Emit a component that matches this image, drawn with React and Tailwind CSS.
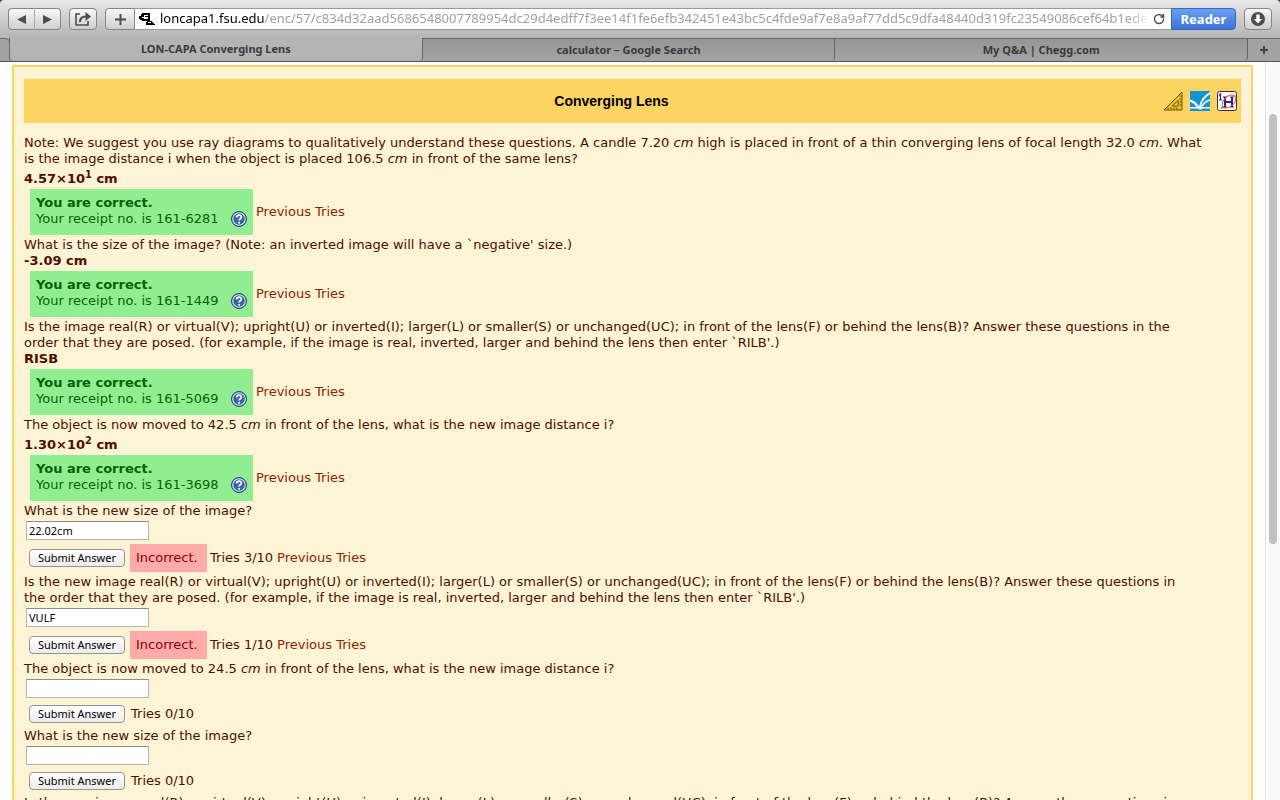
import { RotateCw } from "lucide-react";

const LINK = "text-[#8b2500] hover:underline";

const TABS = ["LON-CAPA Converging Lens", "calculator – Google Search", "My Q&A | Chegg.com"];

function HelpIcon() {
  return (
    <svg viewBox="0 0 16 16" className="h-4 w-4 shrink-0" aria-label="Help">
      <circle cx="8" cy="8" r="7.5" fill="#2f5793" stroke="#24457c" strokeWidth="1" />
      <circle cx="8" cy="8" r="6.3" fill="#3a64a4" stroke="#dfe9f7" strokeWidth="1.1" />
      <path d="M5.7 6.4c0-3 4.7-3 4.7-.3 0 1.700-2.300 1.700-2.300 3.500" fill="none" stroke="#fff" strokeWidth="1.7" />
      <circle cx="8.1" cy="11.700" r="1" fill="#fff" />
    </svg>
  );
}

function Toolbar() {
  const btn = "flex h-[22px] items-center justify-center rounded border border-[#858585] bg-linear-to-b from-[#f8f8f8] to-[#cfcfcf] text-[#4d4d4d]";
  return (
    <div className="flex h-[38px] shrink-0 items-center rounded-t bg-linear-to-b from-[#e8e8e8] to-[#b4b4b4] px-2">
      <div className="flex">
        <button className={`${btn} w-[27px] rounded-r-none border-r-[#aaa]`} aria-label="Back">
          <svg viewBox="0 0 9 9" className="h-[9px] w-[9px]"><path d="M9 0v9L0 4.500z" fill="currentColor" /></svg>
        </button>
        <button className={`${btn} w-[26px] rounded-l-none border-l-0`} aria-label="Forward">
          <svg viewBox="0 0 9 9" className="h-[9px] w-[9px]"><path d="M0 0v9L9 4.500z" fill="currentColor" /></svg>
        </button>
      </div>
      <button className={`${btn} ml-2 w-7`} aria-label="Share">
        <svg viewBox="0 0 16 14" className="h-[14px] w-4" fill="none" stroke="currentColor" strokeWidth="1.6">
          <path d="M5 2H1v11h12V9" />
          <path d="M5 10C5 6 7 4.500 11 4.500" strokeWidth="2.2" />
          <path d="M10.500 0 16 4.500l-5.500 4.500z" fill="currentColor" stroke="none" />
        </svg>
      </button>
      <button className={`${btn} ml-2 w-[30px] rounded-r-none`} aria-label="Add bookmark">
        <svg viewBox="0 0 11 11" className="h-[11px] w-[11px]"><path d="M5.500 0v11M0 5.500h11" stroke="currentColor" strokeWidth="2" /></svg>
      </button>
      <div className="flex h-[22px] min-w-0 flex-1 items-center border-y border-[#999] bg-white pl-1">
        <svg viewBox="0 0 16 12" className="h-3 w-4 shrink-0" shapeRendering="crispEdges">
          <path d="M3 0h8v8h2v1h1v1h1v1h1v1H7V9h1V8H3V7H1V6H0V3h2V1h1z" fill="#000" />
          <path d="M5 2h4v4H5z" fill="#fff" />
          <path d="M6 3h3v1H6zM2 4h3v2H2z" fill="#000" />
          <path d="M3 4h2v1H3zM9 9h3v1H9z" fill="#fff" />
        </svg>
        <div className="ml-[5px] min-w-0 flex-1 overflow-hidden font-['Noto_Sans','Open_Sans',sans-serif] text-[13px] whitespace-nowrap text-[#a0a0a0] mask-r-from-98%">
          <span className="text-black">loncapa1.fsu.edu</span>
          /enc/57/c834d32aad5686548007789954dc29d4edff7f3ee14f1fe6efb342451e43bc5c4fde9af7e8a9af77dd5c9dfa48440d319fc23549086cef64b1ede6
        </div>
        <button className="mr-[6px] ml-1 shrink-0 text-[#4d4d4d]" aria-label="Reload"><RotateCw size={12} strokeWidth={3} /></button>
      </div>
      <button className="h-[22px] w-[65px] rounded-r border border-[#3a66bd] bg-linear-to-b from-[#6a9ff0] to-[#3b74d8] font-['Noto_Sans',sans-serif] text-[13px] leading-5 font-bold text-white">Reader</button>
      <button className={`${btn} ml-2 w-7`} aria-label="Downloads">
        <svg viewBox="0 0 14 14" className="h-[14px] w-[14px]">
          <circle cx="7" cy="7" r="7" fill="currentColor" />
          <path d="M5.300 2.500h3.400V7H11.200L7 11.500 2.800 7h2.500z" fill="#fff" />
        </svg>
      </button>
    </div>
  );
}

function TabBar() {
  return (
    <div className="flex h-6 shrink-0 border-b border-[#555] bg-[#a2a2a2] font-['Noto_Sans',sans-serif] text-[11px] font-bold text-[#3a3a3a]">
      <div className="w-[9px] rounded-tr border-t border-[#666]" />
      {TABS.map((tab, i) => (
        <button
          key={tab}
          className={i === 0
            ? "flex-1 rounded-b border-x border-[#666] bg-[#b4b4b4]"
            : "flex-1 rounded-br border-t border-r border-[#666] bg-linear-to-b from-[#969696] to-[#a4a4a4]"}
        >
          {tab}
        </button>
      ))}
      <button className="flex w-8 items-center justify-center border-t border-[#666]" aria-label="New tab">
        <svg viewBox="0 0 8 8" className="h-2 w-2"><path d="M4 0v8M0 4h8" stroke="#444" strokeWidth="2" /></svg>
      </button>
    </div>
  );
}

function Correct({ answer, receipt, tall }) {
  return (
    <>
      <p className={`leading-4 font-bold ${tall ? "pt-1" : ""}`}>{answer}</p>
      <div className="my-[2px] ml-[6px] flex items-center gap-[3px]">
        <div className="h-[46px] w-[223px] bg-[#90ee90] p-[6px] text-[#006400]">
          <p className="font-bold">You are correct.</p>
          <p className="flex items-center justify-between whitespace-nowrap">Your receipt no. is {receipt} <HelpIcon /></p>
        </div>
        <a href="#tries" className={LINK}>Previous Tries</a>
      </div>
    </>
  );
}

function Answer({ label, value = "", tries, incorrect }) {
  return (
    <form onSubmit={(e) => e.preventDefault()}>
      <input
        aria-label={label}
        defaultValue={value}
        className="mt-[2px] ml-[2px] block h-[19px] w-[123px] border border-[#b5b5b5] border-t-[#8e8e8e] bg-white px-[2px] font-['Noto_Sans',sans-serif] text-[11px] text-black outline-none"
      />
      <div className={`mt-[2px] ml-[5px] flex items-center ${incorrect ? "h-8" : "h-7"}`}>
        <button className="h-[18px] w-24 rounded border border-[#949494] bg-linear-to-b from-white to-[#ececec] font-['Noto_Sans',sans-serif] text-[11px] leading-4 text-black">Submit Answer</button>
        {incorrect && <span className="ml-[5px] w-[77px] bg-[#ffaaaa] p-[6px] text-[#8b0000]">Incorrect.</span>}
        <span className={incorrect ? "ml-[3px]" : "ml-[6px]"}>Tries {tries}/10</span>
        {incorrect && <a href="#tries" className={`ml-1 ${LINK}`}>Previous Tries</a>}
      </div>
    </form>
  );
}

export default function App() {
  return (
    <div className="flex h-screen flex-col overflow-hidden bg-[#3c3f52]">
      <Toolbar />
      <TabBar />
      <div className="flex min-h-0 flex-1 bg-white">
        <main className="mt-[3px] mr-3 ml-3 min-w-0 flex-1 overflow-hidden border-2 border-b-0 border-[#fcd462] bg-[#fdf3d5] px-[10px] pt-3 font-['DejaVu_Sans',Verdana,sans-serif] text-[13px] leading-4 text-[#4d0f00]">
          <header className="mb-3 flex h-11 items-center bg-[#fcd462] px-1">
            <div className="w-8" />
            <h1 className="flex-1 text-center font-['Liberation_Sans',Arial,sans-serif] text-[14px] font-bold text-black">Converging Lens</h1>
            <div className="flex gap-[7px]">
              <svg viewBox="0 0 20 20" className="h-5 w-5">
                <path d="M19 1v18H1z" fill="#e8b920" stroke="#6b5310" />
                <path d="M15 9.500V15H9.500z" fill="#fcd462" stroke="#6b5310" />
                <path d="M5 18.500v-2M8 18.500v-2M11 18.500v-2M14 18.500v-2M18.500 5h-2M18.500 8h-2M18.500 11h-2M18.500 14h-2" stroke="#7a5f10" />
              </svg>
              <svg viewBox="0 0 20 20" className="h-5 w-5">
                <path d="M0 0h20v20H0z" fill="#1293d8" />
                <path d="M0 8.500q6 1.500 9 7Q11 6 20 1v2q-7 5-9.500 12Q14 10 20 8v1.500q-5 2-8 6.500h8v1.500h-7q-1.500 0-3 1.500-1.500-1.500-3-1.500H0V16h6.500Q4 12 0 10.500z" fill="#fff" />
              </svg>
              <svg viewBox="0 0 20 20" className="h-5 w-5">
                <rect x=".5" y=".5" width="19" height="19" rx="2" fill="#fff" stroke="#333" />
                <path d="M8 6v10M15 6v10M8 11h7" stroke="#35207a" strokeWidth="2" />
                <path d="M6 6h4M13 6h4M6 16h4M13 16h4" stroke="#35207a" />
                <path d="M2 4.500 3.500 3v6M2 9h3" fill="none" stroke="#35207a" strokeWidth="1.200" />
                <ellipse cx="12" cy="10.500" rx="8" ry="5" transform="rotate(-42 12 10.500)" fill="none" stroke="#e24a5a" />
                <circle cx="5" cy="17" r="1" fill="#2a9a50" />
              </svg>
            </div>
          </header>

          <p>Note: We suggest you use ray diagrams to qualitatively understand these questions. A candle 7.20 <i>cm</i> high is placed in front of a thin converging lens of focal length 32.0 <i>cm</i>. What<br /> is the image distance i when the object is placed 106.5 <i>cm</i> in front of the same lens?</p>
          <Correct tall answer={<>4.57×10<sup>1</sup> cm</>} receipt="161-6281" />
          <p>What is the size of the image? (Note: an inverted image will have a `negative' size.)</p>
          <Correct answer="-3.09 cm" receipt="161-1449" />
          <p>Is the image real(R) or virtual(V); upright(U) or inverted(I); larger(L) or smaller(S) or unchanged(UC); in front of the lens(F) or behind the lens(B)? Answer these questions in the<br /> order that they are posed. (for example, if the image is real, inverted, larger and behind the lens then enter `RILB'.)</p>
          <Correct answer="RISB" receipt="161-5069" />
          <p>The object is now moved to 42.5 <i>cm</i> in front of the lens, what is the new image distance i?</p>
          <Correct tall answer={<>1.30×10<sup>2</sup> cm</>} receipt="161-3698" />
          <p>What is the new size of the image?</p>
          <Answer label="New image size" value="22.02cm" tries={3} incorrect />
          <p>Is the new image real(R) or virtual(V); upright(U) or inverted(I); larger(L) or smaller(S) or unchanged(UC); in front of the lens(F) or behind the lens(B)? Answer these questions in<br /> the order that they are posed. (for example, if the image is real, inverted, larger and behind the lens then enter `RILB'.)</p>
          <Answer label="New image type" value="VULF" tries={1} incorrect />
          <p>The object is now moved to 24.5 <i>cm</i> in front of the lens, what is the new image distance i?</p>
          <Answer label="Image distance" tries={0} />
          <p>What is the new size of the image?</p>
          <Answer label="Image size" tries={0} />
          <p>Is the new image real(R) or virtual(V); upright(U) or inverted(I); larger(L) or smaller(S) or unchanged(UC); in front of the lens(F) or behind the lens(B)? Answer these questions in<br /> the order that they are posed.</p>
        </main>
        <div className="w-[15px] shrink-0 border-l border-[#e4e4e4] bg-[#fafafa] px-[3px] pt-[52px]">
          <div className="h-[430px] w-2 rounded-full bg-[#c1c1c1]" />
        </div>
      </div>
    </div>
  );
}
